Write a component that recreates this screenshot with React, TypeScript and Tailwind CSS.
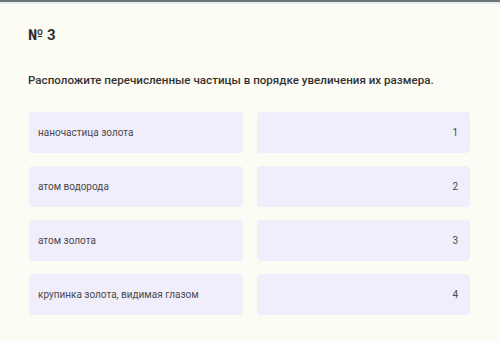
import React from "react";

const items = [
  { left: "наночастица золота", right: "1" },
  { left: "атом водорода", right: "2" },
  { left: "атом золота", right: "3" },
  { left: "крупинка золота, видимая глазом", right: "4" },
];

export default function App() {
  return (
    <div
      className="w-[500px] h-[342px] bg-[#fcfcf4] overflow-hidden flex flex-col"
      style={{ fontFamily: "Roboto, 'Noto Sans', sans-serif" }}
    >
      <div className="h-[2px] bg-[#6e7378]" />
      <div className="h-[2px] bg-[#e4ecef]" />
      <div className="pl-[28px] pr-[30px] pt-[22px] flex flex-col">
        <div className="text-[15px] leading-[18px] font-bold text-[#2e2e2e]">№ 3</div>
        <div className="mt-[28px] text-[11.6px] leading-[16px] font-medium text-[#333]">
          Расположите перечисленные частицы в порядке увеличения их размера.
        </div>
        <div className="mt-[24px] grid grid-cols-2 gap-x-[14px] gap-y-[13px] pl-[1px]">
          {items.map((it) => (
            <React.Fragment key={it.right}>
              <div className="h-[41px] rounded-[4px] bg-[#f0eefb] flex items-center px-[9px] text-[10px] text-[#4a4a4a]">
                {it.left}
              </div>
              <div className="h-[41px] rounded-[4px] bg-[#f0eefb] flex items-center justify-end px-[12px] text-[10px] text-[#4a4a4a]">
                {it.right}
              </div>
            </React.Fragment>
          ))}
        </div>
      </div>
    </div>
  );
}
